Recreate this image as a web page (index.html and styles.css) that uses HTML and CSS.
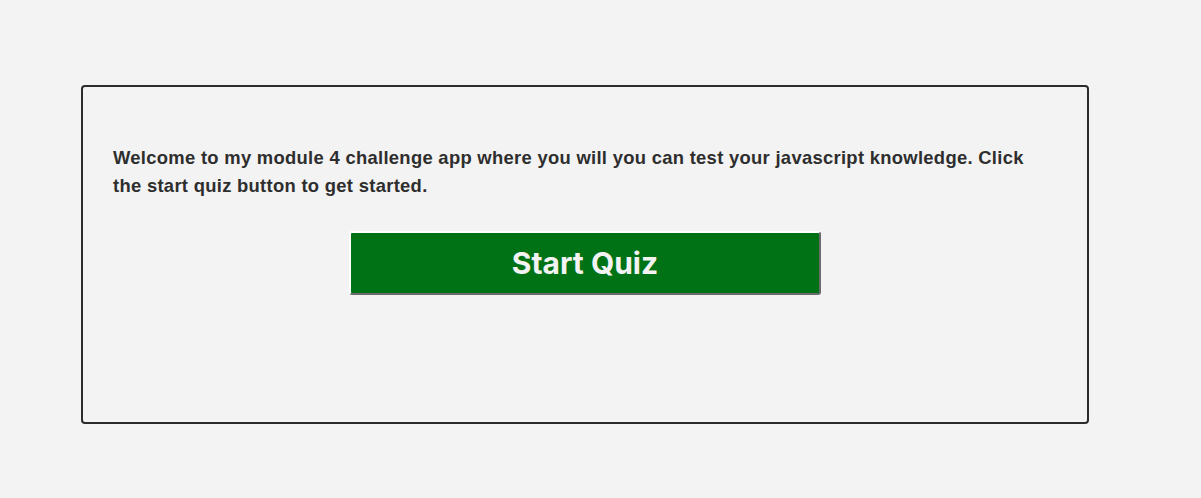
FILE: index.html
```html
<!DOCTYPE html>
<html>
<head>
<meta charset="utf-8">
<link rel="stylesheet" href="styles.css">
</head>
<body>
<main class="card">
  <p class="intro">Welcome to my module 4 challenge app where you will you can test your javascript knowledge. Click the start quiz button to get started.</p>
  <div class="actions">
    <button class="start">Start Quiz</button>
  </div>
</main>
</body>
</html>
```
FILE: styles.css
```css
html, body {
  margin: 0;
  padding: 0;
  background: #f3f3f3;
}
body {
  padding: 85px 112px 0 81px;
  font-family: "Liberation Sans", Arial, sans-serif;
  color: #2e2e2e;
}
.card {
  box-sizing: border-box;
  width: 1008px;
  height: 339px;
  border: 2px solid #2b2b2b;
  border-radius: 4px;
  padding: 57px 50px 0 30px;
}
.intro {
  margin: 0;
  font-size: 18.4px;
  font-weight: bold;
  line-height: 28px;
  letter-spacing: 0.3px;
}
.actions {
  display: flex;
  justify-content: center;
  margin-top: 31px;
  padding-left: 20px;
}
.start {
  box-sizing: border-box;
  width: 472px;
  height: 64px;
  background: #007216;
  color: #f3f3f3;
  border-style: solid;
  border-width: 2px;
  border-top-color: #ffffff;
  border-left-color: #ffffff;
  border-right-color: #6a6a6a;
  border-bottom-color: #6a6a6a;
  border-radius: 3px;
  font-family: Inter, Roboto, sans-serif;
  font-size: 30px;
  font-weight: 700;
  padding: 0 0 1px 0;
}
```
